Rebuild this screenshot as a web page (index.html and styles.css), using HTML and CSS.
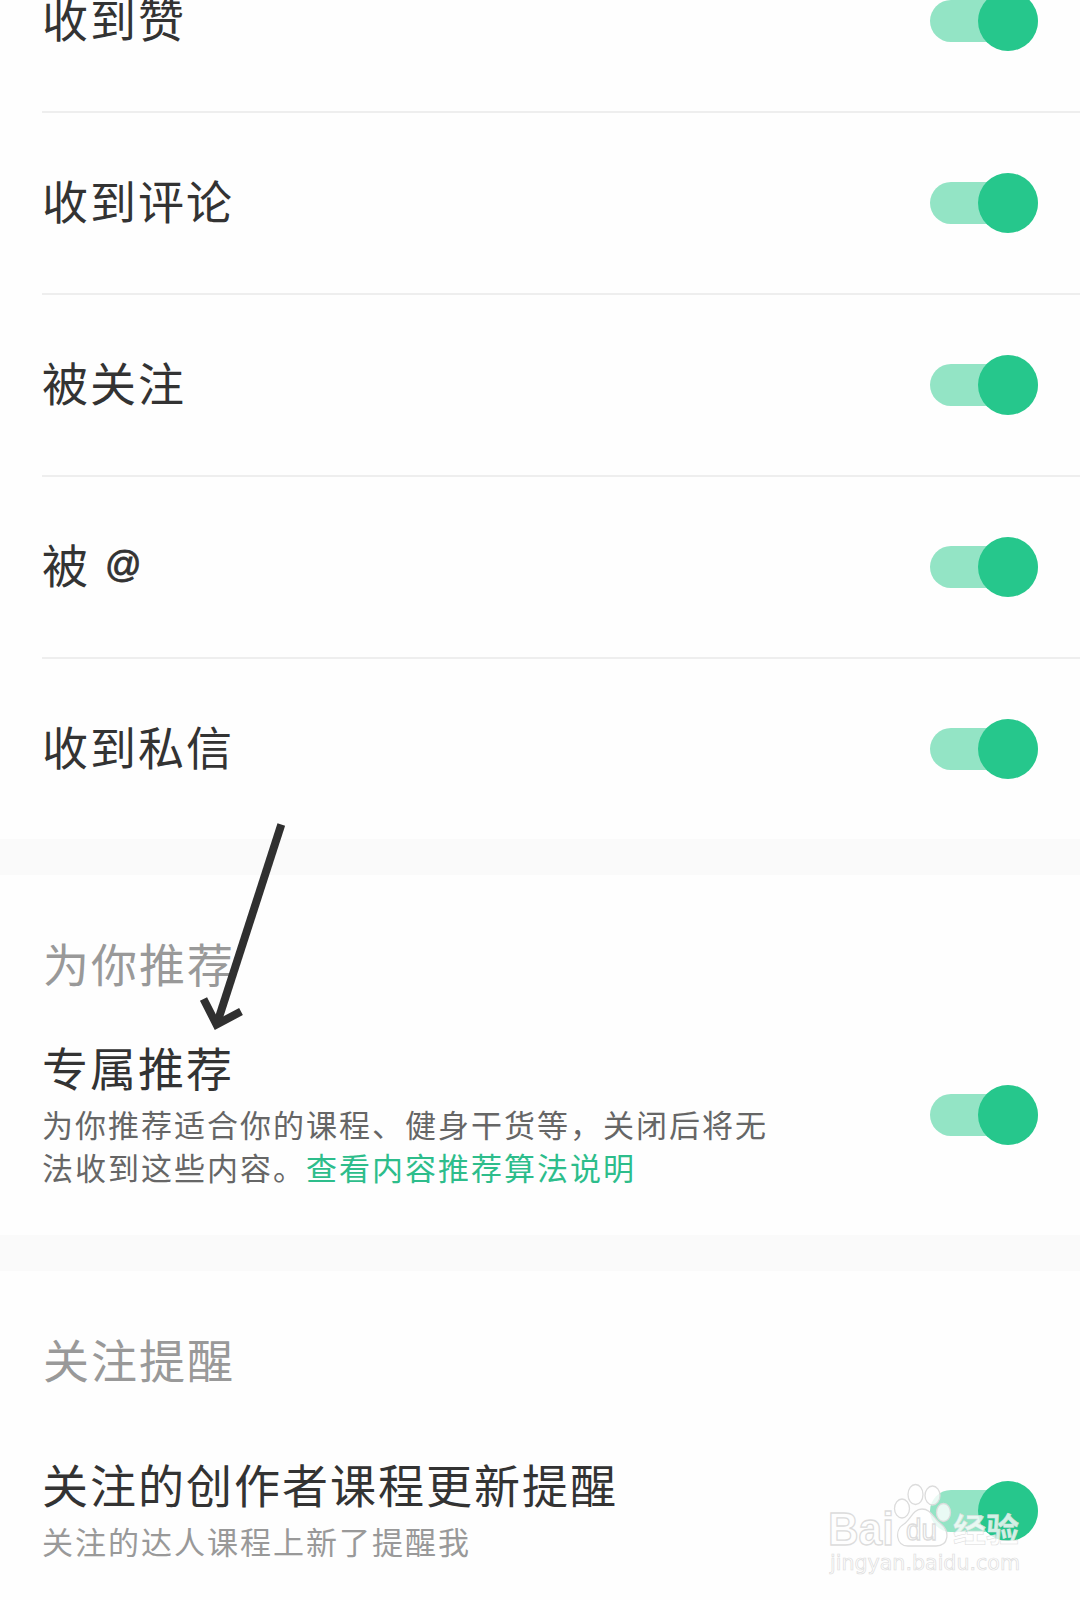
FILE: index.html
```html
<!DOCTYPE html>
<html lang="zh-CN">
<head>
  <meta charset="UTF-8" />
  <meta name="viewport" content="width=device-width, initial-scale=1.0"/>
  <title>消息通知设置</title>
  <link rel="stylesheet" href="styles.css">
</head>
<body>

  <main>
    <!-- 互动通知 -->
    <section class="list">
      <div class="row">
        <span class="title">收到赞</span>
        <span class="switch"></span>
      </div>
      <div class="row">
        <span class="title">收到评论</span>
        <span class="switch"></span>
      </div>
      <div class="row">
        <span class="title">被关注</span>
        <span class="switch"></span>
      </div>
      <div class="row">
        <span class="title">被<span class="latin"> @</span></span>
        <span class="switch"></span>
      </div>
      <div class="row">
        <span class="title">收到私信</span>
        <span class="switch"></span>
      </div>
    </section>

    <!-- 为你推荐 -->
    <section class="group">
      <h2>为你推荐</h2>
      <div class="item">
        <div class="text">
          <p class="title">专属推荐</p>
          <p class="desc">为你推荐适合你的课程、健身干货等，关闭后将无<br>法收到这些内容。<a class="link">查看内容推荐算法说明</a></p>
        </div>
        <span class="switch"></span>
      </div>
    </section>

    <!-- 关注提醒 -->
    <section class="group">
      <h2>关注提醒</h2>
      <div class="item">
        <div class="text">
          <p class="title">关注的创作者课程更新提醒</p>
          <p class="desc light">关注的达人课程上新了提醒我</p>
        </div>
        <span class="switch"></span>
      </div>
    </section>
  </main>

  <svg class="arrow" width="60" height="220" viewBox="190 815 60 220">
    <path d="M281.3 824.5 L217.5 1022" />
    <path d="M203.5 999 L216.5 1024.5 L241 1011.5" />
  </svg>

  <svg class="watermark" width="210" height="110" viewBox="820 1475 210 110">
    <text class="logo" x="828" y="1545" textLength="66" lengthAdjust="spacingAndGlyphs">Bai</text>
    <ellipse cx="902" cy="1508.500" rx="7.500" ry="9.500" />
    <ellipse cx="915.500" cy="1494.500" rx="7.500" ry="10" />
    <ellipse cx="932.500" cy="1495.500" rx="7.500" ry="9.500" />
    <ellipse cx="943.500" cy="1512.500" rx="7" ry="9" />
    <path d="M922 1509 C913 1509 911 1519 904 1524 C894 1530 896 1546 908 1546 L936 1546 C949 1546 950 1531 941 1524 C933 1518 931 1509 922 1509 Z" />
    <text class="du" x="906" y="1540" textLength="31" lengthAdjust="spacingAndGlyphs">du</text>
    <text class="cn" x="953" y="1542" textLength="66">经验</text>
    <text class="site" x="830" y="1570" textLength="190" lengthAdjust="spacingAndGlyphs">jingyan.baidu.com</text>
  </svg>

</body>
</html>
```

FILE: styles.css
```css
* {
  margin: 0;
  padding: 0;
  box-sizing: border-box;
}

body {
  position: relative;
  height: 1600px;
  overflow: hidden;
  background: #fefefe;
  color: #333;
  font-family: 'Noto Sans CJK SC', sans-serif;
}

main {
  display: flow-root;
}

/* 页面已向上滚动，首行被截断 */
.list {
  margin-top: -69px;
}

.row {
  display: flex;
  align-items: center;
  justify-content: space-between;
  height: 182px;
  margin-left: 42px;
  padding-right: 42px;
  border-bottom: 2px solid #eee;
}

.row:last-child {
  height: 180px;
  border-bottom: none;
}

.title {
  margin-bottom: 8px;
  font-size: 46px;
  line-height: 52px;
  letter-spacing: 2px;
}

.latin {
  margin-left: 3px;
  font-family: 'Liberation Sans', sans-serif;
  font-size: 36px;
  line-height: 0;
  vertical-align: 6px;
  white-space: pre;
  -webkit-text-stroke: 0.8px #333;
}

.switch {
  display: flex;
  flex: none;
  align-items: center;
  justify-content: flex-end;
  width: 108px;
  height: 42px;
  border-radius: 21px;
  background: #93e4c5;
}

.switch::after {
  content: '';
  flex: none;
  width: 60px;
  height: 60px;
  border-radius: 50%;
  background: #26c78c;
}

.group {
  height: 396px;
  border-top: 36px solid #fafafa;
}

.group h2 {
  height: 120px;
  padding: 57px 43px 0;
  font-size: 46px;
  font-weight: normal;
  line-height: 60px;
  letter-spacing: 2px;
  color: #999;
}

.item {
  display: flex;
  align-items: center;
  justify-content: space-between;
  height: 240px;
  padding: 0 42px;
}

.text {
  display: flex;
  flex-direction: column;
}

.desc {
  margin-top: 2px;
  padding-bottom: 3px;
  font-size: 31px;
  line-height: 43px;
  letter-spacing: 2px;
  white-space: nowrap;
  color: #666;
}

.desc.light {
  color: #999;
}

.link {
  color: #2dbd8b;
}

/* 指示箭头 */
.arrow {
  position: absolute;
  left: 190px;
  top: 815px;
  overflow: visible;
  fill: none;
  stroke: #303030;
  stroke-width: 8;
}

/* 水印 */
.watermark {
  position: absolute;
  left: 820px;
  top: 1475px;
  fill: rgba(255, 255, 255, 0.8);
  stroke: #dcdcdc;
  stroke-width: 1.3;
}

.watermark text {
  font-family: 'Liberation Sans', sans-serif;
}

.watermark .logo {
  font-size: 46px;
  font-weight: bold;
}

.watermark .du {
  font-size: 29px;
}

.watermark .cn {
  font-family: 'Noto Sans CJK SC', sans-serif;
  font-size: 33px;
  font-weight: bold;
  stroke-width: 0.5;
}

.watermark .site {
  font-family: 'DejaVu Sans', sans-serif;
  font-size: 22px;
  stroke-width: 0.7;
}
```
